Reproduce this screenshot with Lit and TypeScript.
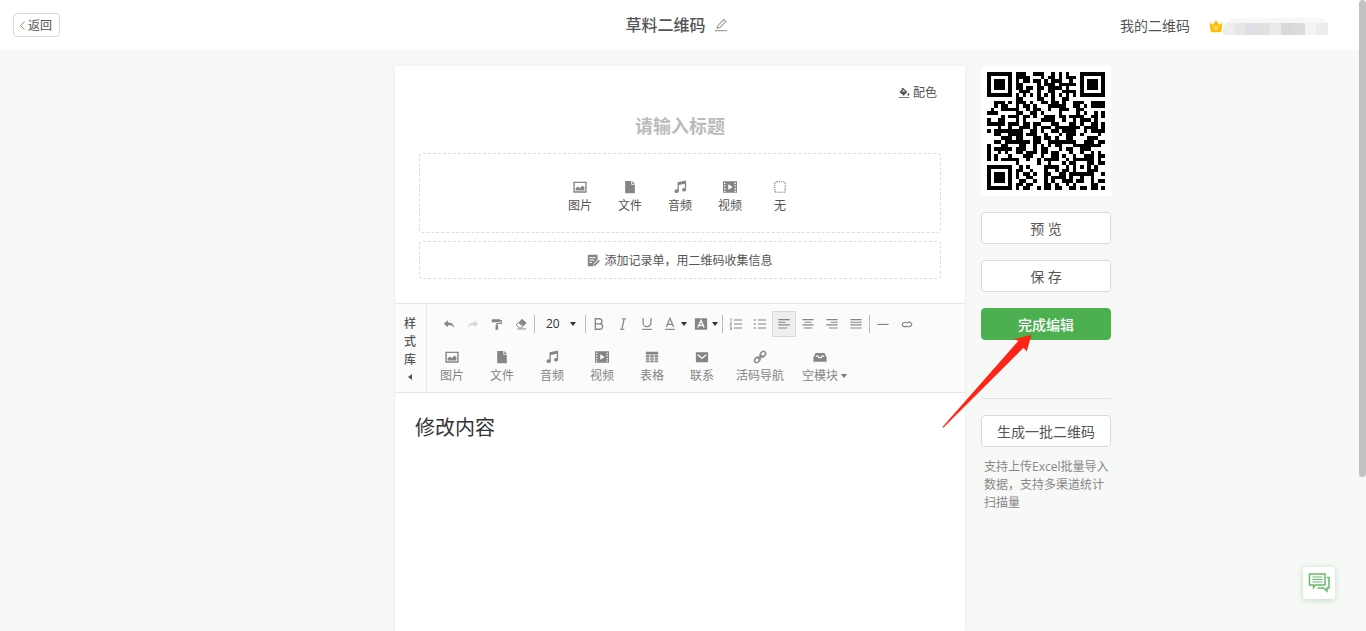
import { LitElement, html, css, svg, nothing } from "lit";
import { customElement, property, state } from "lit/decorators.js";
import { classMap } from "lit/directives/class-map.js";

const ICONS: Record<string, unknown> = {
  image: svg`<path d="M1.200 2.700h13.600v11H1.200z" fill="none" stroke="currentColor" stroke-width="1.600"/><path d="M3 12V9.500l2.500-2 2 1.500L11 6.500l2 1.500v4z"/>`,
  file: svg`<path d="M2.500 1h7v4.500h4V15h-11z"/><path d="M10.500 1l3 3.500h-3z"/>`,
  music: svg`<path d="M5.200 2.600L15 .6v10.600a2.300 2 0 1 1-1.500-1.800V4.300L6.700 5.700v7a2.500 2.100 0 1 1-1.500-1.900z"/>`,
  video: svg`<path d="M0 1.500h16v13H0zM1.200 3v1.500h1.600V3zm0 3v1.500h1.600V6zm0 3v1.500h1.600V9zm0 3v1.500h1.600V12zm12-9v1.500h1.600V3zm0 3v1.500h1.600V6zm0 3v1.500h1.600V9zm0 3v1.500h1.600V12zM6 4.800v6.400l5-3.200z" fill-rule="evenodd"/>`,
  none: svg`<rect x="2" y="2" width="12" height="12" rx="2" fill="none" stroke="currentColor" stroke-width="1.400" stroke-dasharray="1.500 1"/>`,
  form: svg`<path d="M1 1h12v6l-5 5-.5 3H1z"/><path d="M3 4.500h7.500M3 7.500h6M3 10.500h3" stroke="#fff" stroke-width="1.200"/><path d="M14.500 7l1.500 1.500-5.500 5.700-2.300.8.600-2.300z"/>`,
  undo: svg`<path d="M6.500 3v3c5 0 8 2.500 8.500 7-2-2.800-4.500-3.600-8.500-3.600v3L1 7.700z"/>`,
  redo: svg`<path d="M9.500 3v3C4.500 6 1.500 8.500 1 13c2-2.800 4.500-3.600 8.500-3.600v3L15 7.700z"/>`,
  brush: svg`<path d="M1 1.500h11v1h2.500V8H8.500v1.500H9.500V15.500H6V9.500h1V6.600h6V4h-1v1.500H1z"/>`,
  eraser: svg`<path d="M9.500 1l6 5.500-4.500 4.500-6-5.500z"/><path d="M4.500 6l6 5.500-1.500 1.700H5.500L1.500 9.500z" fill="none" stroke="currentColor" stroke-width="1.200"/><path d="M3 14h12v1.200H3z"/>`,
  bold: svg`<path d="M3.800 2h4.700a2.900 2.900 0 0 1 0 5.800H3.800zM3.800 7.800h5.300a3 3 0 0 1 0 6.200H3.800z" fill="none" stroke="currentColor" stroke-width="1.500"/>`,
  italic: svg`<path d="M6.500 2h5M4.500 14h5M9.300 2L6.700 14" fill="none" stroke="currentColor" stroke-width="1.400"/>`,
  underline: svg`<path d="M3.500 1v5.500a4.500 4.500 0 0 0 9 0V1" fill="none" stroke="currentColor" stroke-width="1.400"/><path d="M2.500 13.500h11v1.300h-11z"/>`,
  color: svg`<path d="M3.800 11.500L8 1.500l4.200 10M5.300 8.300h5.400" fill="none" stroke="currentColor" stroke-width="1.400"/><path d="M2.500 13.500h11v1.300h-11z"/>`,
  backcolor: svg`<rect x="1" y="1.500" width="14" height="13" rx="1"/><path d="M4.500 12L8 4l3.500 8M5.700 9.500h4.600" fill="none" stroke="#fff" stroke-width="1.500"/>`,
  ol: svg`<path d="M5.500 3.500H15M5.500 8H15M5.500 12.500H15" stroke="currentColor" stroke-width="1.200"/><path d="M1.500 2h1v3M1 6.500h1.800v1.600H1.200v1.500H3M1 11.500h1.800v3H1M1.500 13H3" fill="none" stroke="currentColor" stroke-width=".8"/>`,
  ul: svg`<path d="M5.500 3.500H15M5.500 8H15M5.500 12.500H15" stroke="currentColor" stroke-width="1.200"/><path d="M1 2.700h1.800v1.600H1zM1 7.200h1.800v1.600H1zM1 11.700h1.800v1.600H1z"/>`,
  left: svg`<path d="M1.500 3h13M1.500 6h8M1.500 9h13M1.500 12.500h10" stroke="currentColor" stroke-width="1.200"/>`,
  center: svg`<path d="M1.500 3h13M4 6h8M1.500 9h13M3 12.500h10" stroke="currentColor" stroke-width="1.200"/>`,
  right: svg`<path d="M1.500 3h13M6.500 6h8M1.500 9h13M4.500 12.500h10" stroke="currentColor" stroke-width="1.200"/>`,
  justify: svg`<path d="M1.500 3h13M1.500 6h13M1.500 9h13M1.500 12.500h13" stroke="currentColor" stroke-width="1.200"/>`,
  rule: svg`<path d="M1.500 8.500h13" stroke="currentColor" stroke-width="1.300"/>`,
  link: svg`<path d="M8 10.600a3.300 2.500 0 1 1 .7-3.200M8 6.600a3.300 2.500 0 1 1-.7 3.200" fill="none" stroke="currentColor" stroke-width="1.300"/>`,
  table: svg`<path d="M1 2h14v3H1zM1 6h4v2.500H1zM6 6h4v2.500H6zM11 6h4v2.500h-4zM1 9.500h4V11H1zM6 9.500h4V11H6zM11 9.500h4V11h-4zM1 12h4v2H1zM6 12h4v2H6zM11 12h4v2h-4z"/>`,
  mail: svg`<path d="M1 2.500h14v11.500H1z"/><path d="M3 5.500l5 4 5-4" fill="none" stroke="#fff" stroke-width="1.300"/>`,
  chain: svg`<g fill="none" stroke="currentColor" stroke-width="1.700" transform="rotate(-45 8 8)"><rect x="0" y="5.500" width="7" height="5" rx="2.500"/><rect x="9" y="5.500" width="7" height="5" rx="2.500"/><path d="M4.500 8h7"/></g>`,
  block: svg`<path d="M3 3.500h10L15.500 8v5.500H.5V8z"/><path d="M3 7h2.800l.8 1.800h2.800l.8-1.800H13" fill="none" stroke="#fff" stroke-width="1.300"/>`,
  palette: svg`<path d="M6.500 1l6 5.500-5 5L2 6.500 5.500 3 4.500 2z"/><path d="M5 6h5L7.500 4z" fill="#fff"/><path d="M13.800 7.500c2 2.500 1.500 4 0 4s-2-1.500 0-4zM1 13.500h14v1.200H1z"/>`,
  pencil: svg`<path d="M3.500 11.800l1-3.300 6.700-6.700 2.300 2.300-6.700 6.700z" fill="none" stroke="currentColor" stroke-width="1.200"/><path d="M1 14.500h14" stroke="currentColor" stroke-width="1.300"/>`,
  back: svg`<path d="M10.500 1.500L4 8l6.500 6.500" fill="none" stroke="currentColor" stroke-width="1.400"/>`,
  crown: svg`<path d="M.5 4l3.800 2.500L8 1l3.700 5.500L15.500 4l-1.600 11H2.100z"/><path d="M5.500 8L8 12 10.500 8" fill="none" stroke="#fff" stroke-width="1"/>`,
  chat: svg`<path d="M1.500 2h15.500v11H7.500L5.500 15.500V13h-4z" fill="none" stroke="currentColor" stroke-width="1.500"/><path d="M4.500 5h10M4.500 7.500h10M4.500 10h10" stroke="currentColor" stroke-width="1.100"/><path d="M19 5.500h2V16h-2v3l-3.500-3H9.500" fill="none" stroke="currentColor" stroke-width="1.500"/>`,
};

const icon = (name: string, size = 14, box = 16) =>
  html`<svg viewBox="0 0 ${box} ${box}" width=${size} height=${size} fill="currentColor" aria-hidden="true">${ICONS[name]}</svg>`;

const QR = [
  "XXXXXXX.XXX..XXX..X.X.X...XXXXXXX",
  "X.....X.XXXX...X.XX.X.XXX.X.....X",
  "X.XXX.X.X.XX.XX.X.XXX..X..X.XXX.X",
  "X.XXX.X.XX....X.XXX.XXXXX.X.XXX.X",
  "X.XXX.X.XX.XX.XX.XXXX.X...X.XXX.X",
  "X.....X..XXX..X..XX..XXXX.X.....X",
  "XXXXXXX.X.X.X.X.X.X.X.X.X.XXXXXXX",
  "........XX....XX..X..XX..........",
  "..XXX.X.XXX.X..XX.XX.X..XXX..XXXX",
  "..X.XX..X.XX.X...XXXXX..XX.X.XXXX",
  ".X..XXXXX..X.XX..X..XXX..XX......",
  "XXX.....XX..XX.X....X....X.X..X.X",
  "....X.XXX.XX.X..XXX.XX.XXXX..XX.X",
  "X..XX...X.X....XXXX..X..X.XXX.X..",
  "XXXXX.XXX.XX.XX...XX...XX.X..XX.X",
  "...X..X..XXX.X.XXX.XXXXXXX.XXXX.X",
  "X.XXXXXXXX..XX.X..XX.XXXX..X.XXXX",
  "..XX..XXXX.XXX..X...X.XXX.X....X.",
  "....XXX.XX...XX.XX.X..XX....XXX..",
  "..XX.XXXXXXX.XX..XXXXXXXX..XXX.XX",
  "X...XX...XX..X.X.X.XX...XXXXXXXX.",
  "X.XXXXX.XXX..X.XX...X.XX..XXX....",
  "X..X.X..XX.XXX.XX.XX...X..X..X.X.",
  "X.X...X...XXX..X..XX.X..X..XXX.XX",
  "X.X.XXXXX..X..X.XXXX..X.XXXXXX.X.",
  "........X.....X..X...X.XX...XX.XX",
  "XXXXXXX..X.X....XXXX..X.X.X.X.X..",
  "X.....X.XX..X...X..X.XX.X...XXX..",
  "X.XXX.X.X.XX.X..XX..XX.XXXXXXX..X",
  "X.XXX.X.X..XX...X.XXXX.X..X..X...",
  "X.XXX.X..XX..X..X.X..XXX.XX..X.XX",
  "X.....X.XX.XX...XX.X..X.X....XX..",
  "XXXXXXX.X.XX..X.XX.XX..XX.XX.XX.X",
];

const RECORD_TILES = [
  ["image", "图片"],
  ["file", "文件"],
  ["music", "音频"],
  ["video", "视频"],
  ["none", "无"],
];

const MODULES = [
  ["image", "图片"],
  ["file", "文件"],
  ["music", "音频"],
  ["video", "视频"],
  ["table", "表格"],
  ["mail", "联系"],
  ["chain", "活码导航"],
  ["block", "空模块"],
];

const ALIGNMENTS = ["left", "center", "right", "justify"];
const SMALL_ICONS = ["undo", "redo", "brush", "eraser"];

const base = css`
  *, *::before, *::after { box-sizing: border-box; }
  button, input, textarea, select { font: inherit; color: inherit; margin: 0; }
  button { background: none; border: 0; padding: 0; cursor: pointer; }
  svg { display: block; flex: none; }
`;

@customElement("qr-code")
class QrCode extends LitElement {
  static styles = css`
    :host { display: block; background: #fff; padding: 6px; }
    .code { display: block; width: 100%; height: auto; }
  `;
  render() {
    const d = QR.map((row, y) =>
      [...row].map((c, x) => (c === "X" ? `M${x} ${y}h1v1h-1z` : "")).join("")
    ).join("");
    return html`<svg class="code" viewBox="0 0 33 33" role="img" aria-label="二维码" shape-rendering="crispEdges"><path d=${d}></path></svg>`;
  }
}

@customElement("editor-toolbar")
class EditorToolbar extends LitElement {
  @state() private align = "left";

  static styles = [base, css`
    :host { display: flex; background: #fbfbfb; border-top: 1px solid #e6e8e8; border-bottom: 1px solid #e6e8e8; color: #858585; }
    .library { width: 32px; flex: none; border-right: 1px solid #e6e8e8; display: flex; flex-direction: column; align-items: center; padding: 11px 1px 0 0; color: #555; font-weight: 500; line-height: 18px; }
    .left-caret { margin-top: 5px; border: 3px solid transparent; border-left: 0; border-right: 4px solid #555; }
    .tools { flex: 1; min-width: 0; padding-bottom: 7px; }
    .row { display: flex; align-items: center; padding: 7px 0 0 10px; }
    .tool { width: 24px; height: 26px; display: flex; align-items: center; justify-content: center; border: 1px solid transparent; }
    .wide { width: 31px; gap: 4px; }
    .tool.active { background: #eee; border-color: #d8dadb; }
    .tool:disabled { color: #d8d8d8; }
    .sep { width: 1px; height: 18px; margin: 0 1px; background: #bbb; flex: none; }
    .size { position: relative; display: flex; align-items: center; width: 48px; color: #333; }
    .select { appearance: none; width: 100%; border: 0; background: none; padding: 0 0 0 10px; height: 26px; outline: 0; }
    .caret { border: 3px solid transparent; border-bottom: 0; border-top: 4px solid #333; flex: none; }
    .size .caret { position: absolute; right: 8px; pointer-events: none; }
    .modules { display: flex; padding: 13px 0 0; }
    .module { min-width: 50px; padding: 0 9px; display: flex; flex-direction: column; align-items: center; gap: 3px; line-height: 18px; }
    .label { display: flex; align-items: center; gap: 3px; }
    .arrowed svg { margin-right: 10px; }
    .label .caret { border-top-color: #777; }
  `];

  private tool(name: string, title: string, caret = false, disabled = false) {
    const active = name === this.align;
    return html`<button class=${classMap({ tool: true, wide: caret, active })} title=${title} aria-label=${title}
      ?disabled=${disabled} @click=${() => { if (ALIGNMENTS.includes(name)) this.align = name; }}>
      ${icon(name, SMALL_ICONS.includes(name) ? 12 : 14)}${caret ? html`<span class="caret"></span>` : nothing}
    </button>`;
  }

  render() {
    return html`
      <button class="library"><span>样</span><span>式</span><span>库</span><span class="left-caret"></span></button>
      <div class="tools">
        <div class="row">
          ${this.tool("undo", "撤销")}${this.tool("redo", "重做", false, true)}${this.tool("brush", "格式刷")}${this.tool("eraser", "清除格式")}
          <span class="sep"></span>
          <span class="size">
            <select class="select" aria-label="字号"><option>20</option><option>16</option><option>14</option></select>
            <span class="caret"></span>
          </span>
          <span class="sep"></span>
          ${this.tool("bold", "加粗")}${this.tool("italic", "斜体")}${this.tool("underline", "下划线")}
          ${this.tool("color", "字体颜色", true)}${this.tool("backcolor", "背景色", true)}
          <span class="sep"></span>
          ${this.tool("ol", "有序列表")}${this.tool("ul", "无序列表")}
          ${this.tool("left", "左对齐")}${this.tool("center", "居中")}${this.tool("right", "右对齐")}${this.tool("justify", "两端对齐")}
          <span class="sep"></span>
          ${this.tool("rule", "分隔线")}${this.tool("link", "链接")}
        </div>
        <div class="modules">
          ${MODULES.map(([name, label]) => {
            const arrowed = name === "block";
            return html`<button class=${classMap({ module: true, arrowed })}>${icon(name)}<span class="label">${label}${arrowed ? html`<span class="caret"></span>` : nothing}</span></button>`;
          })}
        </div>
      </div>`;
  }
}

@customElement("page-header")
class PageHeader extends LitElement {
  static styles = [base, css`
    :host { display: grid; grid-template-columns: 1fr auto 1fr; align-items: center; height: 50px; padding: 0 38px 0 13px; background: #fff; }
    .back { justify-self: start; display: flex; align-items: center; height: 24px; padding: 1px 7px 0 4px; border: 1px solid #d9d9d9; border-radius: 4px; color: #555; }
    .back svg { width: 10px; color: #8b7b50; }
    .title { display: flex; align-items: center; gap: 8px; padding-left: 12px; font-size: 16px; font-weight: 500; color: #555; margin: 0; line-height: 24px; }
    .edit { color: #999; }
    .account { justify-self: end; display: flex; align-items: center; padding-top: 2px; font-size: 14px; color: #555; }
    .mine { color: inherit; text-decoration: none; margin-right: 19px; line-height: 24px; }
    .crown { color: #ffc107; }
    .name { display: flex; align-items: flex-end; height: 17px; width: 105px; border-radius: 14px 8px 0 0; overflow: hidden; background: #f7f7f7; }
    .cell { flex: 1; height: 12px; background: #ededed; }
    .c1 { background: #e8e6e2; } .c2 { background: #dce0e5; } .c3 { background: #e3e1e0; }
    .c4 { background: #e9eaeb; } .c5 { background: #d9d9d9; } .c6 { background: #dbdcde; }
    .c7 { background: #f3f4f6; } .c8 { background: #ededed; }
  `];
  render() {
    return html`
      <button class="back">${icon("back", 13)}返回</button>
      <h1 class="title">草料二维码<button class="edit" aria-label="修改名称">${icon("pencil", 14)}</button></h1>
      <div class="account">
        <a class="mine" href="#">我的二维码</a>
        <span class="crown">${icon("crown", 14)}</span>
        <span class="name">${[0, 1, 2, 3, 4, 5, 6, 7, 8].map((n) => html`<span class="cell c${n}"></span>`)}</span>
      </div>`;
  }
}

@customElement("side-panel")
class SidePanel extends LitElement {
  static styles = [base, css`
    :host { display: block; position: relative; width: 130px; }
    .btn { display: block; width: 100%; height: 32px; margin-top: 16px; border: 1px solid #d9d9d9; border-radius: 4px; background: #fff; color: #555; font-size: 14px; line-height: 32px; }
    .primary { border-color: #4caf50; background: #4caf50; color: #fff; font-weight: 500; }
    .divider { border: 0; border-top: 1px solid #e2e4e2; margin: 58px 0 0; }
    .hint { margin: 11px 0 0; padding-left: 3px; line-height: 18px; color: #888; }
    .arrow { position: absolute; left: -39px; top: 268px; pointer-events: none; }
  `];
  render() {
    return html`
      <qr-code></qr-code>
      <button class="btn">预 览</button>
      <button class="btn">保 存</button>
      <button class="btn primary">完成编辑</button>
      <hr class="divider" />
      <button class="btn">生成一批二维码</button>
      <p class="hint">支持上传Excel批量导入数据，支持多渠道统计扫描量</p>
      <svg class="arrow" width="92" height="96" viewBox="0 0 92 96" aria-hidden="true">
        <path d="M89.500 .7L84.700 17.500 81.500 13.700 1.300 93.800.5 93 76.500 6.700 71.500 5.500z" fill="#ff2415"></path>
      </svg>`;
  }
}

@customElement("app-root")
class AppRoot extends LitElement {
  @property() content = "修改内容";

  static styles = [base, css`
    :host { display: flex; flex-direction: column; position: relative; height: 100vh; overflow: hidden; background: #f7f9f7; font: 12px/18px "Open Sans", "Noto Sans CJK SC", sans-serif; color: #555; }
    page-header { flex: none; }
    .page { flex: 1; display: grid; grid-template-columns: minmax(130px, 1fr) minmax(0, 570px) minmax(130px, 1fr); gap: 16px; padding: 16px 6px 0 0; min-height: 0; }
    .card { grid-column: 2; display: flex; flex-direction: column; min-width: 0; background: #fff; box-shadow: 0 0 4px rgba(0, 0, 0, 0.06); }
    .top { padding: 18px 24px 24px; }
    .theme { display: flex; align-items: center; gap: 3px; margin-left: auto; margin-right: 4px; line-height: 18px; }
    .heading { display: block; width: 100%; height: 28px; margin: 10px 0 13px; padding: 0; border: 0; outline: 0; text-align: center; font-size: 18px; font-weight: 700; line-height: 28px; }
    .heading::placeholder { color: #bbb; opacity: 1; }
    .drop { display: flex; justify-content: center; align-items: center; width: 100%; border: 1px dashed #ddd; border-radius: 4px; }
    .media { height: 80px; padding-top: 8px; }
    .record { height: 38px; margin-top: 8px; padding-top: 1px; gap: 4px; }
    .tile { width: 50px; display: flex; flex-direction: column; align-items: center; gap: 3px; line-height: 18px; }
    .drop svg { color: #858585; }
    .body { flex: 1; width: 100%; resize: none; border: 0; outline: 0; background: none; padding: 20px; font-size: 20px; line-height: 30px; color: #333; overflow: hidden; }
    .thumb { position: absolute; top: 0; right: 0; width: 7px; height: 477px; border-radius: 4px; background: #c1c1c1; }
    .chat { position: absolute; right: 31px; bottom: 32px; width: 32px; height: 32px; display: flex; align-items: center; justify-content: center; border-radius: 3px; background: #fff; color: #66bb6a; box-shadow: 0 1px 6px rgba(76, 175, 80, 0.35); }
  `];

  render() {
    return html`
      <page-header></page-header>
      <main class="page">
        <section class="card">
          <div class="top">
            <button class="theme">${icon("palette", 12)}配色</button>
            <input class="heading" placeholder="请输入标题" aria-label="标题" />
            <div class="drop media">
              ${RECORD_TILES.map(([name, label]) => html`<button class="tile">${icon(name)}<span>${label}</span></button>`)}
            </div>
            <button class="drop record">${icon("form", 13)}添加记录单，用二维码收集信息</button>
          </div>
          <editor-toolbar></editor-toolbar>
          <textarea class="body" aria-label="内容" .value=${this.content}></textarea>
        </section>
        <side-panel></side-panel>
      </main>
      <span class="thumb"></span>
      <button class="chat" aria-label="在线客服">${icon("chat", 22, 22)}</button>`;
  }
}
